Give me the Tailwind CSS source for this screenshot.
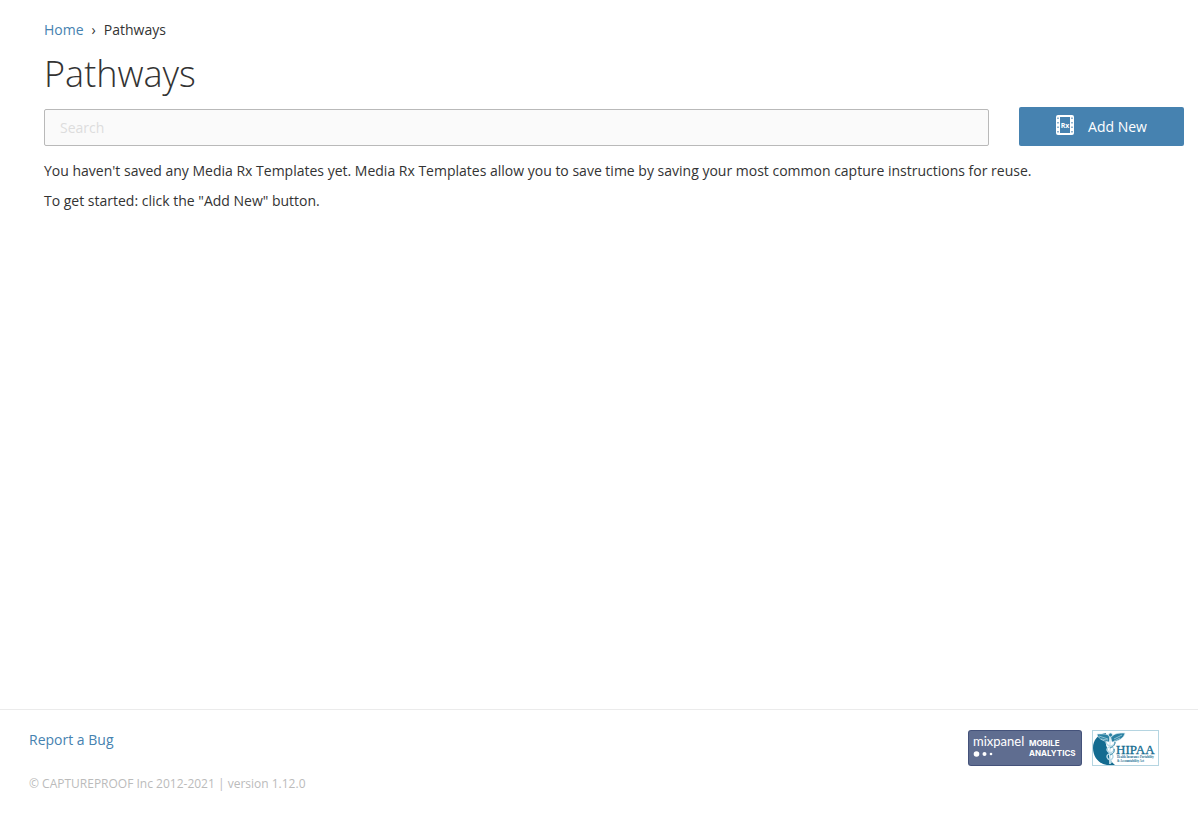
<!DOCTYPE html>
<html lang="en">
<head>
    <meta charset="UTF-8">
    <meta name="viewport" content="width=device-width, initial-scale=1.0">
    <title>Pathways</title>
    <script src="https://cdn.jsdelivr.net/npm/@tailwindcss/browser@4"></script>
</head>
<body class="bg-white min-h-screen flex flex-col text-sm text-[#333333] font-['Open_Sans',sans-serif]">
    <main class="grow pl-11 pr-3.5 pt-5">
        <nav aria-label="Breadcrumb" class="flex gap-2">
            <a href="#" class="text-[#4682b0]">Home</a>
            <span>›</span>
            <span>Pathways</span>
        </nav>
        <h1 class="mt-2 text-4xl leading-[52px] font-light">Pathways</h1>
        <form class="mt-[7px] flex items-end gap-[30px]">
            <input type="search" aria-label="Search" placeholder="Search" class="grow h-[37px] px-[15px] rounded-[2px] border border-[#b9b9b9] bg-[#fafafa] placeholder:text-[#dddddd]">
            <button type="button" class="w-[165px] h-[39px] flex items-center justify-center gap-3.5 rounded-[2px] bg-[#4682b0] text-white font-medium">
                <svg class="w-[18px] h-[22px] mb-1" viewBox="0 0 18 22" aria-hidden="true">
                    <rect x="0" y="1" width="18" height="20" rx="2" fill="#fff"/>
                    <rect x="4" y="3" width="10" height="16" fill="#4682b0"/>
                    <path d="M2 3.500v16M16 3.500v16" stroke="#4682b0" stroke-width="1.200" stroke-dasharray="1.500 3"/>
                    <text x="9" y="14" text-anchor="middle" font-size="7" font-weight="700" fill="#fff">Rx</text>
                </svg>
                Add New
            </button>
        </form>
        <p class="mt-[15px]">You haven't saved any Media Rx Templates yet. Media Rx Templates allow you to save time by saving your most common capture instructions for reuse.</p>
        <p class="mt-2.5">To get started: click the "Add New" button.</p>
    </main>

    <footer class="flex justify-between border-t border-[#ebebeb] pt-5 pb-[25px] pl-[29px] pr-[39px]">
        <div>
            <a href="#" class="text-[#4682b0]">Report a Bug</a>
            <p class="mt-6 text-xs leading-5 text-[#bbbbbb]">© CAPTUREPROOF Inc 2012-2021 | version 1.12.0</p>
        </div>
        <div class="flex items-start gap-2.5">
            <a href="#" aria-label="Mixpanel mobile analytics">
                <svg class="w-[114px] h-9" viewBox="0 0 114 36">
                    <rect width="114" height="36" rx="3" fill="#44527a"/>
                    <rect x="1" y="1" width="112" height="34" rx="2" fill="#5f6d90"/>
                    <g fill="#fff">
                        <text x="5" y="16" font-size="13" font-family="Lato, sans-serif">mixpanel</text>
                        <g font-size="8" font-weight="700" font-family="Inter, sans-serif">
                            <text x="61" y="16">MOBILE</text>
                            <text x="61" y="26">ANALYTICS</text>
                        </g>
                        <circle cx="8.500" cy="24" r="2.800"/>
                        <circle cx="16.500" cy="24" r="2"/>
                        <circle cx="23" cy="24" r="1.300"/>
                    </g>
                </svg>
            </a>
            <a href="#" aria-label="HIPAA">
                <svg class="w-[67px] h-9" viewBox="0 0 67 36" fill="none">
                    <rect x=".5" y=".5" width="66" height="35" fill="#fff" stroke="#b5d5e1"/>
                    <path d="M14 3C6 4 1 10 1 18c0 9 6 16 14 17h8c-4-3-6-7-6-12l-3-8z" fill="#136b90"/>
                    <path d="M19 7C15 3 10 4 5 4c1 4 5 7 12 8M19 7c4-4 8-4 14-4-1 5-6 8-13 9" fill="#2c82a3" stroke="#d9edf3" stroke-width=".7"/>
                    <path d="M7 6l9 3M9 9l7 1M22 9l8-4M22 11l6-3" stroke="#b8dbe7" stroke-width=".7"/>
                    <path d="M18 6v28" stroke="#d9edf3" stroke-width="1.600"/>
                    <path d="M14 12c0 5 9 4 8 8s-8 3-7 7 5 2 4 6M23 12c0 5-9 4-8 8s7 3 6 7-4 2-3 5" stroke="#b8dbe7" stroke-width="1.400"/>
                    <path d="M23 12c0 4-3 5-5 6M22 19c1 4-2 5-4 6" stroke="#2c82a3" stroke-width="1"/>
                    <circle cx="18.500" cy="5" r="2" fill="#2c82a3" stroke="#d9edf3" stroke-width=".7"/>
                    <g fill="#136b90" font-family="Liberation Serif, serif">
                        <text x="24" y="24" font-size="13" stroke="#136b90" stroke-width=".3">HIPAA</text>
                        <g font-size="3" font-weight="700">
                            <text x="25" y="28">Health Insurance Portability</text>
                            <text x="25" y="32">&amp; Accountability Act</text>
                        </g>
                    </g>
                </svg>
            </a>
        </div>
    </footer>
</body>
</html>
